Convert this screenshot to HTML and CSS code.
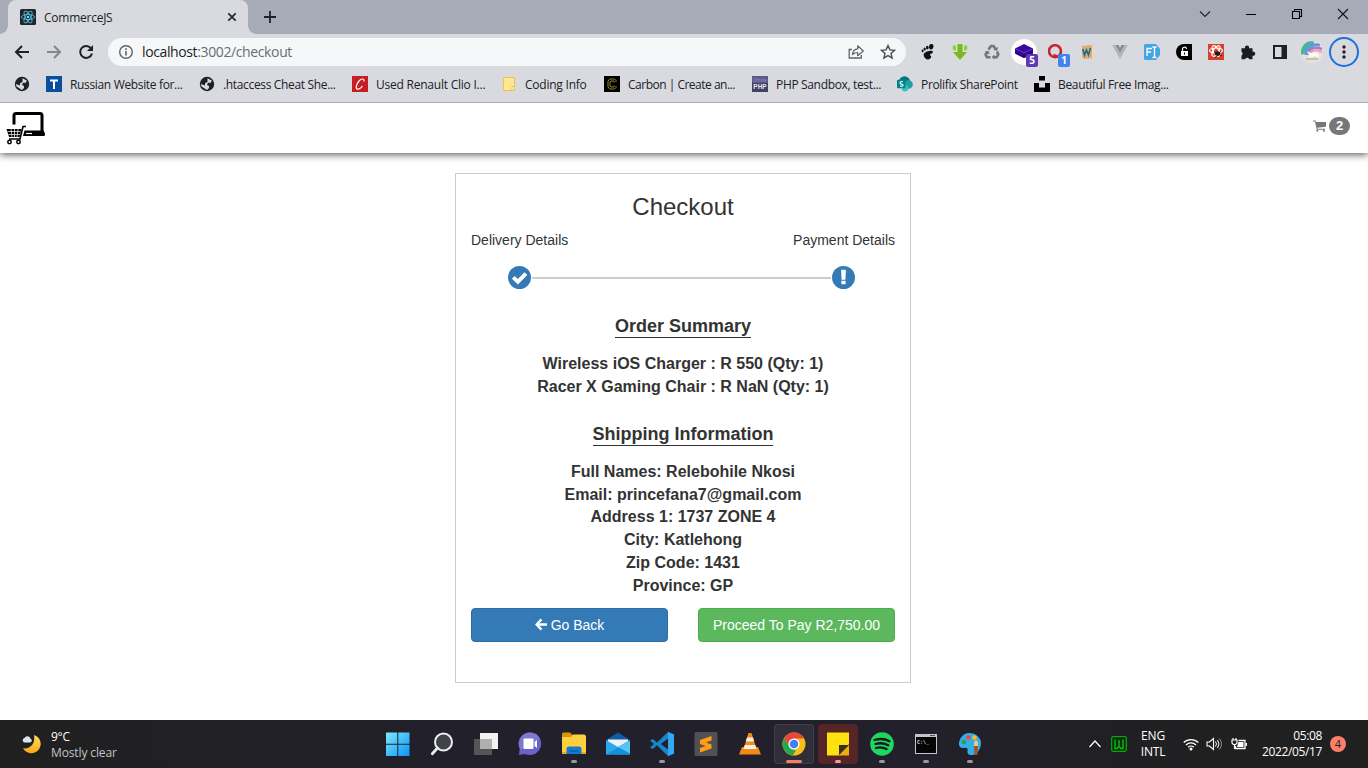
FILE: index.html
```html
<!DOCTYPE html>
<html lang="en">
<head>
<meta charset="utf-8">
<title>CommerceJS</title>
<link rel="stylesheet" href="styles.css">
</head>
<body>
<div class="screen">
  <header class="browser">
    <div class="tabstrip">
      <div class="tab">
        <svg class="i16" viewBox="0 0 16 16"><rect width="16" height="16" rx="1.5" fill="#20232a"/><g fill="none" stroke="#4fb8d4" stroke-width=".9"><ellipse cx="8" cy="8" rx="6.6" ry="2.6"/><ellipse cx="8" cy="8" rx="6.6" ry="2.6" transform="rotate(60 8 8)"/><ellipse cx="8" cy="8" rx="6.6" ry="2.6" transform="rotate(120 8 8)"/></g><circle cx="8" cy="8" r="1.3" fill="#61dafb"/></svg>
        <span class="tab-title">CommerceJS</span>
        <svg class="tab-close" viewBox="0 0 10 10"><path d="M1.3 1.3l7.4 7.4M8.7 1.3L1.3 8.7" stroke="#26282b" stroke-width="1.7"/></svg>
      </div>
      <svg class="newtab" viewBox="0 0 12 12"><path d="M6 0v12M0 6h12" stroke="#202124" stroke-width="1.8"/></svg>
      <div class="winctl">
        <svg viewBox="0 0 12 12"><path d="M1 3.5l5 5 5-5" fill="none" stroke="#222" stroke-width="1.1"/></svg>
        <svg viewBox="0 0 12 12"><path d="M1 6.5h10" stroke="#000"/></svg>
        <svg viewBox="0 0 12 12"><path d="M1.500 3.500h7v7h-7zM3.500 3V1.500h7v7H9" fill="none" stroke="#000" stroke-width="1.1"/></svg>
        <svg viewBox="0 0 12 12"><path d="M1 1l10 10M11 1L1 11" stroke="#111" stroke-width="1.1"/></svg>
      </div>
    </div>

    <div class="toolbar">
      <div class="navbtns">
        <svg class="i16" viewBox="0 0 16 16"><path d="M15 8H2.300M8 2L2 8l6 6" fill="none" stroke="#202124" stroke-width="2"/></svg>
        <svg class="i16" viewBox="0 0 16 16"><path d="M1 8h12.700M8 2l6 6-6 6" fill="none" stroke="#85878b" stroke-width="2"/></svg>
        <svg class="i16" viewBox="0 0 16 16"><path d="M13.200 4.600A6 6 0 1 0 14 9.500" fill="none" stroke="#202124" stroke-width="2"/><path d="M15 1v6H9z" fill="#202124"/></svg>
      </div>
      <div class="omnibox">
        <svg class="i16" viewBox="0 0 16 16"><circle cx="8" cy="8" r="6.300" fill="none" stroke="#5f6368" stroke-width="1.400"/><path d="M8 7v4.500M8 4.300v1.600" stroke="#5f6368" stroke-width="1.600"/></svg>
        <span class="url"><b>localhost</b>:3002/checkout</span>
        <svg class="i16 share" viewBox="0 0 16 16"><path d="M4 5.500H1.200v8.500h12.100v-3" fill="none" stroke="#5f6368" stroke-width="1.300"/><path d="M4.500 10.500c.3-3.600 2-5.500 5.200-5.700V1.800L15.300 7l-5.600 4.700V8.500C7.500 8.500 5.900 9 4.500 10.500z" fill="none" stroke="#5f6368" stroke-width="1.200" stroke-linejoin="round"/></svg>
        <svg class="i16" viewBox="0 0 16 16"><path d="M8 1.600l1.900 4.300 4.700.4-3.600 3.100 1.100 4.600L8 11.600 3.900 14 5 9.400 1.400 6.300l4.700-.4z" fill="none" stroke="#4b4e52" stroke-width="1.400"/></svg>
      </div>
      <div class="exts">
        <span><svg class="i16" viewBox="0 0 16 16"><g fill="#111"><ellipse cx="11.200" cy="2.700" rx="2.200" ry="2.800" transform="rotate(15 11.200 2.700)"/><ellipse cx="7.300" cy="3.600" rx="1.300" ry="1.900"/><ellipse cx="4.700" cy="5" rx="1.100" ry="1.600"/><ellipse cx="2.600" cy="6.900" rx="1" ry="1.400"/><path d="M4 9.500C6 6.500 13 5.600 13 8c0 1.500-3 1.600-3 2.800s1.500.8 1.200 2.300C10.800 15 8.400 16 6.700 15.200 4.600 14.300 3 11.500 4 9.500z"/></g></svg></span>
        <span><svg class="i16" viewBox="0 0 16 16"><path d="M5.500 0h5v8H15l-7 8-7-8h4.500z" fill="#76b920"/><path d="M.8 1.500h3.200V7L.8 5.500zM12 1.500h3.200v4L12 7z" fill="#8fcb35"/></svg></span>
        <span><svg class="i16" viewBox="0 0 16 16"><g fill="none" stroke="#747679" stroke-width="2.600"><path d="M4.500 5.500L7 2h2.500l2 3"/><path d="M13 7.500l1.300 3-1.600 2.700H9.500"/><path d="M6.500 13.200H3L1.600 10.500 3.200 7.800"/></g><path d="M9.300 6l4.200.7.300-4zM10.500 10.500v5L7.600 13zM.5 8l4-1.500 1.200 3.800z" fill="#747679"/></svg></span>
        <span class="ext-active"><svg class="i18" viewBox="0 0 18 18"><path d="M9 1l9 4.500-9 4.500-9-4.500z" fill="#3b0aa0"/><path d="M0 5.500L9 10l9-4.500v5L9 15l-9-4.500z" fill="#3206a0"/><path d="M0 10.500l2-1 7 3.500 7-3.500 2 1L9 15z" fill="#280477"/></svg><em class="count purple">5</em></span>
        <span><svg class="i16" viewBox="0 0 16 16"><circle cx="7" cy="7.200" r="6" fill="none" stroke="#c3272f" stroke-width="2.600"/><path d="M5.500 11c3-1 3 3.500 6.500 2.500" fill="none" stroke="#c3272f" stroke-width="2"/></svg><em class="count blue">1</em></span>
        <span><svg class="i16" viewBox="0 0 16 16"><path d="M2 2l10-1 2 1v12l-10 1-2-2z" fill="#e2aa77"/><path d="M12 1l2 1v12l-2 .3z" fill="#f7d6ae"/><path d="M2.800 5l1.700 6 2-5 2 5 2-7" fill="none" stroke="#19708f" stroke-width="1.700"/></svg></span>
        <span><svg class="i16" viewBox="0 0 16 16"><path d="M0 1h3.500L8 8.500 12.500 1H16L8 15z" fill="#b4b5b8"/><path d="M3.500 1H6.500L8 3.700 9.500 1h3L8 9z" fill="#888a8d"/></svg></span>
        <span><svg class="i16" viewBox="0 0 16 16"><path d="M1.500 0H12l4 5v6l-4 5H1.500A1.500 1.500 0 0 1 0 14.500v-13A1.500 1.500 0 0 1 1.500 0z" fill="#43a6e3"/><path d="M3 12V4.500h5M3 8h4M8.500 3h1.200l.8.8.8-.8h1.200M8.500 13.500h1.200l.8-.8.8.8h1.200M10.500 4v9" fill="none" stroke="#fff" stroke-width="1.300"/></svg></span>
        <span><svg class="i16" viewBox="0 0 16 16"><path d="M8 0h8v16H8A8 8 0 0 1 8 0z" fill="#000"/><rect x="5" y="7" width="7" height="5" fill="#fff"/><path d="M6.500 7V5.500a2 2 0 0 1 4-.5" fill="none" stroke="#fff" stroke-width="1.200"/><path d="M8.500 8.500v2" stroke="#000"/></svg></span>
        <span><svg class="i16" viewBox="0 0 16 16"><rect width="16" height="16" fill="#d8402e"/><g fill="none" stroke="#fff" stroke-width="1.200"><ellipse cx="8" cy="6.500" rx="6.500" ry="2.500"/><ellipse cx="8" cy="7" rx="6" ry="2.700" transform="rotate(58 8 7)"/><ellipse cx="8" cy="7" rx="6" ry="2.700" transform="rotate(122 8 7)"/></g><ellipse cx="9.500" cy="9.500" rx="2.800" ry="2.200" fill="#2a1715"/><path d="M6 8l8 4M12.500 7.500l-5 6" stroke="#2a1715"/></svg></span>
        <span><svg class="i16" viewBox="0 0 16 16"><path d="M1.500 4.200H5a2.100 2.100 0 1 1 4 0h3.500v3.500a2.100 2.100 0 1 1 0 4v3.600H9.200a2.100 2.100 0 0 0-4 0H1.500v-3.800a2.100 2.100 0 0 0 0-3.700z" fill="#1b1c1e"/></svg></span>
        <span><svg class="i16" viewBox="0 0 16 16"><path d="M2 2h12v12H2z" fill="none" stroke="#202124" stroke-width="2"/><path d="M9.500 2H14v12H9.500z" fill="#202124"/></svg></span>
        <span><svg class="i22" viewBox="0 0 22 22"><defs><clipPath id="avatar"><circle cx="11" cy="11" r="11"/></clipPath></defs><g clip-path="url(#avatar)"><path d="M0 0h22v22H0z" fill="#e5e1df"/><path d="M0 14V0h12l2 4-8 8z" fill="#48b694"/><path d="M5 14C5 5 10 3 19 4" fill="none" stroke="#5d9ce0" stroke-width="3.200"/><path d="M7 14c1-6 5-9 14-6" fill="none" stroke="#b275cf" stroke-width="2.600"/><path d="M9 14c1-5 5-6 12-3" fill="none" stroke="#ef9eb7" stroke-width="2"/><path d="M6 10l4 2 6-1 2 3-1 3-2-2-5 1-3 3 1-5z" fill="#fffaf0"/><path d="M5 18h12" stroke="#bdb58d" stroke-width="1.300"/></g></svg></span>
        <span class="menu"><svg class="i16" viewBox="0 0 16 16"><g fill="#202124"><circle cx="8" cy="3" r="1.700"/><circle cx="8" cy="8" r="1.700"/><circle cx="8" cy="13" r="1.700"/></g></svg></span>
      </div>
    </div>

    <nav class="bookmarks">
      <div><svg class="i16" viewBox="0 0 16 16"><circle cx="8" cy="8" r="7.200" fill="#202124"/><path d="M8.500 2.200l4.300 2.300-1 2.200H9L8 9l2 1v2l-2 2-5.500-3.600L1.800 8 6 9.500V7.200L8.500 6z" fill="#d9dae0"/></svg></div>
      <div><svg class="i16" viewBox="0 0 16 16"><rect width="16" height="16" fill="#08509b"/><path d="M4 4.500h8M8 4v9" stroke="#fff" stroke-width="2"/></svg><span>Russian Website for...</span></div>
      <div><svg class="i16" viewBox="0 0 16 16"><circle cx="8" cy="8" r="7.200" fill="#202124"/><path d="M8.500 2.200l4.300 2.300-1 2.200H9L8 9l2 1v2l-2 2-5.500-3.600L1.800 8 6 9.500V7.200L8.500 6z" fill="#d9dae0"/></svg><span>.htaccess Cheat She...</span></div>
      <div><svg class="i16" viewBox="0 0 16 16"><rect width="16" height="16" fill="#c81d25"/><path d="M12 5.500C12.500 2.500 9.500 2 7 5s-4 8-1.500 8.200c2 .1 4-1.700 5-3.200" fill="none" stroke="#fff" stroke-width="1.200"/></svg><span class="roomy">Used Renault Clio I...</span></div>
      <div><svg class="i16" viewBox="0 0 16 16"><path d="M2.500 1.500h11v13h-11z" fill="#ffe694" stroke="#eac54e"/><path d="M11 14.500v-4h2.500v4z" fill="#fff0b8" stroke="#eac54e"/></svg><span class="roomy">Coding Info</span></div>
      <div><svg class="i16" viewBox="0 0 16 16"><rect width="16" height="16" fill="#000"/><path d="M12 6V4.500L10.500 3H6L4 5v6l2 2h4.500l1.500-1.500V10M10 6.500V5H7L6 6v4l1 1h3V9.500" fill="none" stroke="#8e8427"/></svg><span class="snug">Carbon | Create an...</span></div>
      <div><svg class="i16" viewBox="0 0 16 16"><rect width="16" height="16" fill="#5c5a8b"/><path d="M0 7h16v9H0z" fill="#444163"/><text x="8" y="5.500" class="php-top">Online</text><text x="8" y="12.500" class="php">PHP</text></svg><span>PHP Sandbox, test...</span></div>
      <div><svg class="i16" viewBox="0 0 17 17"><circle cx="8" cy="6" r="5.800" fill="#03787c"/><circle cx="12.300" cy="9" r="4.500" fill="#20a0a5"/><circle cx="8.500" cy="13" r="3.400" fill="#38bfc5"/><rect y="4" width="9" height="9" rx="1" fill="#038387"/><path d="M6.200 6.100C4 5.100 2.500 7 3.700 8s3.300.8 2.500 2.200c-.6.800-2 .7-3 .2" fill="none" stroke="#fff" stroke-width="1.200"/></svg><span>Prolifix SharePoint</span></div>
      <div><svg class="i16" viewBox="0 0 16 16"><path d="M5 0h6v4.500H5zM0 7h5v4.500h6V7h5v9H0z" fill="#000"/></svg><span>Beautiful Free Imag...</span></div>
    </nav>
  </header>

  <div class="site-nav">
    <svg class="logo" viewBox="0 0 40 34"><path d="M8 13.500V4.500a2 2 0 0 1 2-2h24a2 2 0 0 1 2 2V20" fill="none" stroke="#000" stroke-width="3"/><path d="M18.500 19.500H37.500l1.500 3v1.200q0 1.300-1.300 1.300H17z" fill="#000"/><path d="M20 22.500h6" stroke="#fff" stroke-width="1.200"/><path d="M20 15.500h-3l-3 12.500H3" fill="none" stroke="#000" stroke-width="1.600"/><path d="M.5 18H15.500l-2 8H3z" fill="#000"/><path d="M1.500 20.500h13M2.500 23.500h11.500M5 18l1 8M8.500 18v8M12 18l-1 8" stroke="#fff" stroke-width=".7"/><g fill="#fff" stroke="#000" stroke-width="1.500"><circle cx="3.500" cy="31" r="1.700"/><circle cx="12.500" cy="31" r="1.700"/></g></svg>
    <div class="cart">
      <svg viewBox="0 0 13 12"><path d="M0 .5h2.600l.4 1.600h10v4.600L4.300 7.800l.3 1H12v.9H3.800L2 1.500H0z" fill="#777"/><circle cx="4.300" cy="10.700" r="1" fill="#777"/><circle cx="11" cy="10.700" r="1" fill="#777"/></svg>
      <span class="badge">2</span>
    </div>
  </div>

  <main class="page">
    <section class="card">
      <h3>Checkout</h3>
      <div class="steps"><span>Delivery Details</span><span>Payment Details</span></div>
      <div class="progress">
        <svg viewBox="0 0 24 24"><circle cx="12" cy="12" r="12" fill="#337ab7"/><path d="M5.500 11.800l4.800 4.600 8.400-8.400" fill="none" stroke="#fff" stroke-width="4"/></svg>
        <i></i>
        <svg viewBox="0 0 24 24"><circle cx="12" cy="12" r="12" fill="#337ab7"/><path d="M9.500 4h5l-.5 10.300h-4zM9.800 15.500h4.400v3.500H9.800z" fill="#fff"/></svg>
      </div>
      <h4>Order Summary</h4>
      <ul>
        <li>Wireless iOS Charger : R 550 (Qty: 1)</li>
        <li>Racer X Gaming Chair : R NaN (Qty: 1)</li>
      </ul>
      <h4 class="shipping">Shipping Information</h4>
      <ul>
        <li>Full Names: Relebohile Nkosi</li>
        <li>Email: princefana7@gmail.com</li>
        <li>Address 1: 1737 ZONE 4</li>
        <li>City: Katlehong</li>
        <li>Zip Code: 1431</li>
        <li>Province: GP</li>
      </ul>
      <div class="actions">
        <button class="btn primary"><svg viewBox="0 0 13 13"><path d="M7 1L1.700 6.500 7 12M2 6.500h11" fill="none" stroke="#fff" stroke-width="2.600"/></svg>Go Back</button>
        <button class="btn success">Proceed To Pay R2,750.00</button>
      </div>
    </section>
  </main>

  <footer class="taskbar">
    <div class="weather">
      <svg viewBox="0 0 20 20"><defs><linearGradient id="moon" x2="0" y2="1"><stop stop-color="#ffe05a"/><stop offset="1" stop-color="#f9a91c"/></linearGradient></defs><path d="M12 1a9.300 9.300 0 1 1-11 13c5 2 13-3 11-13z" fill="url(#moon)"/><path d="M2.500 8.500a2.300 2.300 0 0 1 0-4.500 3.200 3.200 0 0 1 6 .8 1.900 1.900 0 0 1-.5 3.700z" fill="#d5e6f5"/></svg>
      <div><div>9°C</div><div class="dim">Mostly clear</div></div>
    </div>
    <div class="apps">
      <span><svg viewBox="0 0 24 24"><defs><linearGradient id="win" x2="1" y2="1"><stop stop-color="#7deaff"/><stop offset="1" stop-color="#0a93f5"/></linearGradient></defs><path d="M0 .5h11.300v11.300H0zM12.300.5H23.500v11.300H12.300zM0 12.800h11.300V24H0zM12.300 12.800H23.500V24H12.300z" fill="url(#win)"/></svg></span>
      <span><svg viewBox="0 0 24 24"><circle cx="13.500" cy="10" r="8.500" fill="#41434a" stroke="#eee" stroke-width="2"/><path d="M7.500 16L2.300 21.800" stroke="#eee" stroke-width="2.800" stroke-linecap="round"/></svg></span>
      <span><svg viewBox="0 0 24 24"><rect x="6" y="1" width="18" height="16" fill="#f1f1f1"/><rect y="7" width="18" height="16" fill="#555"/><path d="M6 7h12v10H6z" fill="#b0b0b0"/></svg></span>
      <span><svg viewBox="0 0 24 24"><path d="M12 .5a11.300 11.300 0 1 1-5 21.500L1 23l.7-6A11.300 11.300 0 0 1 12 .5z" fill="#6664cc"/><path d="M12 .5a11.300 11.300 0 0 1 10 6L3 18A11.300 11.300 0 0 1 12 .5z" fill="#8078cc"/><rect x="5.500" y="6.500" width="10" height="10.500" rx="1" fill="#fff"/><path d="M16.500 10l2.500-2v8l-2.500-2z" fill="#fff"/></svg></span>
      <span class="open"><svg viewBox="0 0 24 24"><path d="M0 2.500C0 1 .7.500 2 .5h6l3 3V8H0z" fill="#dc9500"/><path d="M0 5h9l2-2.500h11.500L24 4v18H0z" fill="#ffd03e"/><path d="M0 20h24v2H0z" fill="#efa91a"/><path d="M4.500 22v-5c0-1.500.8-2.500 2.500-2.500h10c1.700 0 2.500 1 2.500 2.500v5z" fill="#147bd1"/><path d="M7.500 19h9" stroke="#075fa5" stroke-width="1.500"/></svg></span>
      <span><svg viewBox="0 0 24 24"><path d="M0 8L12 .5 24 8v9H0z" fill="#0f5da9"/><path d="M2 7.500h20v7L12 18 2 14z" fill="#eef2f5"/><path d="M0 8l12 7L24 8v14.500H0z" fill="#29aaea"/><path d="M24 9v13.500H0z" fill="#188fd9"/><path d="M24 9v12.500L12 15z" fill="#56c5f5"/></svg></span>
      <span class="open"><svg viewBox="0 0 24 24"><path d="M18 0l6 2.500v19L18 24 7 13.300 2.800 17 0 15.500 4 12 0 8.500 2.800 7 7 10.500z" fill="#1787cb"/><path d="M18 6.500v11L10.800 12z" fill="#22202c"/><path d="M18 0l6 2.500v19L18 24z" fill="#35a8ef"/></svg></span>
      <span><svg viewBox="0 0 24 24"><rect x=".5" width="23" height="24" rx="1.500" fill="#505153"/><path d="M17.500 4v4.500L12 10.500l5.500 2v4L6 20.500V16l5.500-2L6 12V8z" fill="#ff9d18"/></svg></span>
      <span><svg viewBox="0 0 24 24"><path d="M4 15h16l3 7.500H1z" fill="#f28b13"/><path d="M10.500 1h3L19 18.500H5z" fill="#f58b17"/><path d="M9 5.500h6l1.200 4H7.800zM6.700 13h10.600l1.200 4H5.500z" fill="#f0efec"/></svg></span>
      <span class="open focus"><svg viewBox="0 0 24 24"><circle cx="12" cy="12" r="11.500" fill="#f9bd19"/><path d="M2 6.200A11.500 11.500 0 0 1 22 6.500H12l-5 8z" fill="#e6483c"/><path d="M2 6.200l6.500 10 3.500 1.500 2 .5-3.500 5.200A11.500 11.500 0 0 1 2 6.200z" fill="#25a851"/><circle cx="12" cy="12" r="5.600" fill="#fff"/><circle cx="12" cy="12" r="4.300" fill="#3d82ee"/></svg></span>
      <span class="open alert"><svg viewBox="0 0 24 24"><path d="M1 .5h22V12l-9 11.500H1z" fill="#ffe010"/><path d="M13 23.500V13h10z" fill="#39301b"/><path d="M13 23.500L23 13v10.500z" fill="#eaae14"/></svg></span>
      <span class="open"><svg viewBox="0 0 24 24"><circle cx="12" cy="12" r="11.800" fill="#1ed760"/><path d="M4.500 8c5-1.500 11-1 15 1.300M5.500 12c4-1.200 9-.8 12.700 1.300M6 16c3.500-1 7.500-.6 10.500 1.100" fill="none" stroke="#171b1a" stroke-width="2.300" stroke-linecap="round"/></svg></span>
      <span class="open"><svg viewBox="0 0 24 24"><rect x="1" y="2" width="22" height="20" fill="#c5c5c5"/><rect x="2" y="5" width="20" height="16" fill="#060606"/><path d="M16 3.500h5" stroke="#555"/><text x="3" y="12" class="cmd">C:\_</text></svg></span>
      <span class="open"><svg viewBox="0 0 24 24"><path d="M11 1C5 1 1 7 1 12c0 3 2 4.500 5 4 3-.7 4 .5 3.500 3-.5 3 2 4.500 5 4C20 22 23 16 23 11S18 1 11 1z" fill="#35aee8"/><circle cx="6" cy="10" r="2.300" fill="#2e9d57"/><circle cx="10.500" cy="5.500" r="2.300" fill="#e94a3c"/><circle cx="16.500" cy="5.500" r="2.300" fill="#f5bd31"/><path d="M18 8l2 2v5h-4v-5z" fill="#f2c382"/><path d="M16 14h4l-.5 9h-3z" fill="#9b5527"/></svg></span>
    </div>
    <div class="tray">
      <svg class="chev" viewBox="0 0 12 12"><path d="M.5 9L6 3l5.500 6" fill="none" stroke="#fff" stroke-width="1.200"/></svg>
      <svg class="i16" viewBox="0 0 16 16"><rect x=".7" y=".7" width="14.600" height="14.600" rx="1.500" fill="#062a06" stroke="#08a80b" stroke-width="1.300"/><path d="M4 3.500v9h2l2-2 2 2h2v-9M8 4v7" fill="none" stroke="#0cc20f" stroke-width="1.400"/></svg>
      <div class="lang"><div>ENG</div><div>INTL</div></div>
      <svg class="i16" viewBox="0 0 16 16"><g fill="none" stroke="#fff" stroke-width="1.300"><path d="M.7 6.500a10.500 10.500 0 0 1 14.600 0M3 9a7 7 0 0 1 10 0M5.200 11.200a4 4 0 0 1 5.600 0"/></g><circle cx="8" cy="13" r="1.500" fill="#fff"/></svg>
      <svg class="i16 vol" viewBox="0 0 16 16"><path d="M1 6h2.500L7.500 2.500v11L3.500 10H1z" fill="none" stroke="#fff" stroke-width="1.100"/><path d="M9.500 5.500q2 2.500 0 5M11.500 4q3 4 0 8" fill="none" stroke="#fff"/><path d="M13.500 2.500q4 5.500 0 11" fill="none" stroke="#888"/></svg>
      <svg class="i16 bat" viewBox="0 0 16 16"><path d="M7.500 4.500h6.500v8H4.500V10" fill="none" stroke="#fff" stroke-width="1.300"/><path d="M7.500 6h5v5H6z" fill="#fff"/><path d="M15.300 7v3" stroke="#fff" stroke-width="1.400"/><path d="M1 4h5v3L4.700 8.500H2.300L1 7zM2 2v2M5 2v2M3.500 8v4.500H5" fill="none" stroke="#fff" stroke-width="1.200"/></svg>
      <div class="clock"><div>05:08</div><div>2022/05/17</div></div>
      <span class="notif">4</span>
    </div>
  </footer>
</div>
</body>
</html>
```
FILE: styles.css
```css
* { box-sizing: border-box; }
body { margin: 0; background: #fff; overflow: hidden; }
svg { display: block; flex: none; }
.screen {
  width: 1368px; height: 768px;
  display: flex; flex-direction: column;
  font-family: "Open Sans", "Noto Sans", sans-serif;
  font-size: 12px; color: #202124;
}
.i16 { width: 16px; height: 16px; }
.i18 { width: 18px; height: 18px; }
.i22 { width: 22px; height: 22px; }

/* browser chrome */
.browser { height: 103px; flex: none; background: #d9dae0; border-bottom: 1px solid #adaeb2; position: relative; z-index: 2; }
.tabstrip { height: 34px; background: #a7abb8; display: flex; align-items: center; padding: 0 2px 0 8px; }
.tab {
  width: 240px; height: 34px; background: #d9dae0; border-radius: 8px 8px 0 0;
  display: flex; align-items: center; padding: 0 11px 0 12px; position: relative;
}
.tab::before, .tab::after { content: ""; position: absolute; bottom: 0; width: 8px; height: 8px; }
.tab::before { left: -8px; background: radial-gradient(circle at 0 0, #a7abb8 7.5px, #d9dae0 8px); }
.tab::after { right: -8px; background: radial-gradient(circle at 100% 0, #a7abb8 7.5px, #d9dae0 8px); }
.tab-title { flex: 1; margin-left: 8px; letter-spacing: -.25px; }
.tab-close { width: 10px; height: 10px; }
.newtab { width: 12px; height: 12px; margin-left: 16px; }
.winctl { margin-left: auto; display: grid; grid-template-columns: repeat(4, 46px); justify-items: center; height: 28px; align-items: center; align-self: flex-start; }
.winctl svg { width: 12px; height: 12px; }

.toolbar { height: 36px; display: flex; align-items: center; padding: 0 6px; }
.navbtns { width: 102px; display: flex; gap: 16px; padding-left: 8px; }
.omnibox { width: 798px; height: 28px; border-radius: 14px; background: #f6f7f9; display: flex; align-items: center; padding: 0 10px; }
.url { flex: 1; margin-left: 8px; padding-bottom: 1px; font-size: 14px; line-height: 19px; color: #6a6d72; letter-spacing: -.38px; }
.url b { font-weight: 400; color: #202124; }
.share { margin-right: 16px; }
.exts { display: grid; grid-template-columns: repeat(14, 32px); margin-left: 6px; }
.exts > span { width: 30px; height: 30px; margin: 0 1px; display: flex; align-items: center; justify-content: center; position: relative; }
.exts .ext-active { width: 26px; height: 26px; margin: 2px 3px; background: #fff; border-radius: 50%; }
.exts .menu { border: 2px solid #1a6ee8; border-radius: 50%; }
.count {
  position: absolute; right: -1px; bottom: 0; width: 12px; height: 13px; border-radius: 2px;
  color: #fff; font: bold 10px/13px "Open Sans", sans-serif; text-align: center;
}
.ext-active .count { right: -1px; bottom: -2px; }
.purple { background: #6236b4; }
.blue { background: #3f83f2; right: 1px; }

.bookmarks { height: 28px; padding-left: 14px; display: grid; grid-template-columns: 32px 153px 153px 149px 103px 148px 145px 137px 160px; align-items: center; white-space: nowrap; }
.bookmarks > div { display: flex; align-items: center; gap: 8px; letter-spacing: -.34px; }
.bookmarks .roomy { letter-spacing: -.23px; }
.bookmarks .snug { letter-spacing: -.5px; }
.php-top { font: 4.5px "Open Sans", sans-serif; fill: #9795c0; text-anchor: middle; letter-spacing: 0; }
.php { font: bold 6.5px "Liberation Sans", sans-serif; fill: #e4e4ee; text-anchor: middle; letter-spacing: 0; }

/* shop page */
.site-nav { height: 50px; flex: none; background: #fff; display: flex; align-items: center; justify-content: space-between; padding: 0 18px 0 6px; box-shadow: 0 1px 8px rgba(0, 0, 0, .75); position: relative; z-index: 1; }
.logo { width: 40px; height: 34px; }
.cart { display: flex; align-items: center; gap: 3px; padding-bottom: 4px; }
.cart svg { width: 13px; height: 12px; }
.badge { width: 21px; height: 18px; border-radius: 10px; background: #777; color: #fff; font: bold 13px/18px "Liberation Sans", Arial, sans-serif; text-align: center; }
.page { flex: 1; padding: 20px 2px 0 0; display: flex; justify-content: center; align-items: flex-start; font-family: "Liberation Sans", Arial, sans-serif; color: #333; }
.card { width: 456px; height: 510px; border: 1px solid #ccc; padding: 20px 15px 0; text-align: center; background: #fff; }
h3 { margin: 0 0 10px; font-size: 24px; font-weight: 400; line-height: 26px; }
.steps { display: flex; justify-content: space-between; font-size: 14px; line-height: 20px; }
.progress { display: flex; justify-content: center; margin: 16px 3px 0 0; height: 24px; }
.progress svg { width: 23px; height: 23px; }
.progress i { width: 299px; height: 2px; background: #ccc; margin: 0 1px; align-self: center; }
h4 { display: table; margin: 26px auto 15px; padding-bottom: 1px; font-size: 18px; line-height: 20px; font-weight: 700; border-bottom: 1px solid #333; }
.shipping { margin-top: 25px; }
ul { list-style: none; margin: 0; padding: 0; font-size: 16px; font-weight: 700; line-height: 22.857px; }
.actions { display: grid; grid-template-columns: 1fr 1fr; gap: 30px; margin-top: 10px; }
.btn { height: 34px; border: 1px solid; border-radius: 4px; color: #fff; font: 14px/20px "Liberation Sans", Arial, sans-serif; padding: 0; display: flex; align-items: center; justify-content: center; gap: 4px; white-space: nowrap; }
.btn svg { width: 12px; height: 13px; }
.primary { background: #337ab7; border-color: #2e6da4; }
.success { background: #5cb85c; border-color: #4cae4c; }

/* taskbar */
.taskbar { height: 48px; flex: none; background: linear-gradient(90deg, #202020, #22202b 35%, #22202b 65%, #202020 90%); color: #fff; display: grid; grid-template-columns: 376px 1fr auto; align-items: center; padding-right: 22px; line-height: 16px; }
.weather { display: flex; align-items: center; gap: 9px; padding-left: 22px; letter-spacing: -.3px; }
.weather svg { width: 20px; height: 20px; }
.weather > div { padding-top: 2px; }
.dim { color: #c4c4c4; letter-spacing: -.12px; }
.apps { display: grid; grid-template-columns: repeat(14, 44px); }
.apps span { height: 40px; width: 40px; margin: 4px 2px; display: flex; align-items: center; justify-content: center; position: relative; border-radius: 4px; }
.apps svg { width: 24px; height: 24px; }
.open::after { content: ""; position: absolute; bottom: 1px; left: 17px; width: 6px; height: 3px; border-radius: 2px; background: #98979d; }
.focus { box-shadow: inset 0 0 0 1px #403e49; background: #302e39; }
.alert { background: #562525; }
.focus::after { left: 12px; width: 16px; background: #fb7b5e; }
.alert::after { background: #ff94a6; }
.cmd { font: bold 5px "Liberation Mono", monospace; fill: #ddd; }
.tray { display: flex; align-items: center; }
.chev { width: 12px; height: 12px; margin-right: 10px; }
.lang { width: 28px; margin: 0 16px 0 12px; text-align: center; letter-spacing: -.2px; }
.vol { margin-left: 7px; }
.bat { margin-left: 9px; }
.clock { width: 64px; margin-left: 11px; text-align: right; letter-spacing: -.38px; }
.notif { width: 16px; height: 16px; margin-left: 8px; border-radius: 50%; background: #fa8168; color: #282020; text-align: center; font-size: 11px; }
```
